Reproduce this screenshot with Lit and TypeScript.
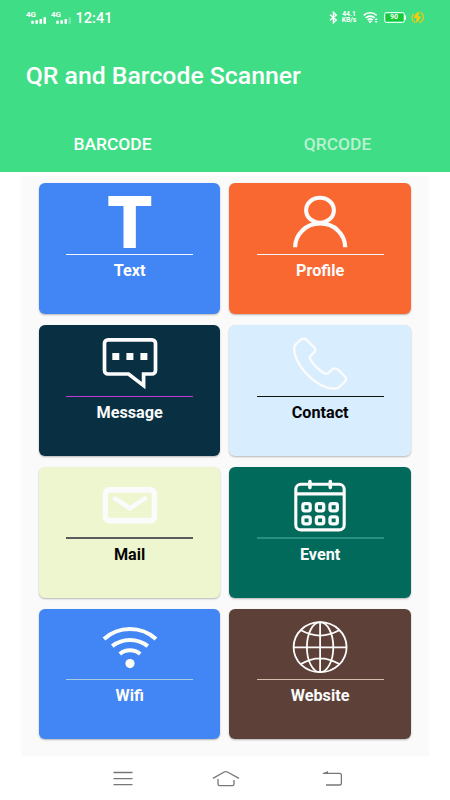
import { LitElement, html, svg, css } from "lit";
import { customElement } from "lit/decorators.js";
import { classMap } from "lit/directives/class-map.js";

const icons = {
  text: svg`<text class="glyph" x="29.9" y="52.6" text-anchor="middle">T</text>`,
  profile: svg`
    <ellipse cx="30" cy="16.2" rx="13.9" ry="12.5" stroke-width="4.1"/>
    <path d="M5.1 53.3A25 23.8 0 0 1 55.2 53.3" stroke-width="4.2"/>`,
  message: svg`
    <path d="M8 3.8H52a3.5 3.5 0 0 1 3.5 3.5V34.5a3.5 3.5 0 0 1-3.5 3.5H43.6V49.6L28.6 38H8a3.5 3.5 0 0 1-3.5-3.5V7.3A3.5 3.5 0 0 1 8 3.8Z" stroke-width="3.7"/>
    <path class="solid" d="M12.3 16.9h7v7h-7zM26.4 16.9h7v7h-7zM40.4 16.9h7v7h-7z"/>`,
  contact: svg`
    <path d="M10.6 3.8L5.8 8.4Q3.6 10.8 4.3 15.8C6.8 28.5 18 41.7 29.5 48.2Q41 54.4 48.5 51.8L55.2 45.3Q57 43 55.2 40.8L48.2 33.9Q45.3 31.6 42.4 33.2L38.4 36.8Q36.8 38.4 34.6 37.4C28 33.8 23.4 28.6 20.2 23.2Q19.2 21.1 20.8 19.6L24.5 15.9Q26.2 13.9 24.5 11.8L16.3 3.7Q13.5 1.6 10.6 3.8Z" stroke-width="2.4"/>`,
  mail: svg`
    <rect x="5.4" y="11.9" width="49.1" height="30.7" rx="4" stroke-width="5.6"/>
    <path d="M13.2 19.3L30 30.4L46.7 19.3" stroke-width="4.6"/>`,
  event: svg`
    <rect x="5.8" y="6.3" width="48.4" height="45.6" rx="5" stroke-width="3.1"/>
    <path d="M6 15.8H54" stroke-width="3.3"/>
    <path d="M19.9 3.6V9.6M40.3 3.6V9.6" stroke-width="3.6" stroke-linecap="round"/>
    ${[25.7, 38.8].map((y) => [12.9, 26.4, 40].map((x) => svg`
      <rect x=${x} y=${y} width="7.3" height="7.1" rx="1.8" stroke-width="3.3"/>`))}`,
  wifi: svg`
    <path d="M4 19A38.8 38.8 0 0 1 56 19M12.2 26.2A29 29 0 0 1 47.8 26.2M19.8 34A16 16 0 0 1 40.2 34" stroke-width="4"/>
    <circle class="solid" cx="30" cy="43.6" r="4.6"/>`,
  website: svg`
    <ellipse cx="30.1" cy="27.2" rx="26.5" ry="25" stroke-width="1.8"/>
    <ellipse cx="30.1" cy="27.2" rx="13.2" ry="25" stroke-width="1.8"/>
    <path d="M30.1 2V52.5M3.5 27.4H56.7M11 10.3Q30 20.8 49.2 10.3M11 44Q30 32.6 49.2 44" stroke-width="1.8"/>`,
};

type Kind = keyof typeof icons;

const tiles: { kind: Kind; label: string }[] = [
  { kind: "text", label: "Text" },
  { kind: "profile", label: "Profile" },
  { kind: "message", label: "Message" },
  { kind: "contact", label: "Contact" },
  { kind: "mail", label: "Mail" },
  { kind: "event", label: "Event" },
  { kind: "wifi", label: "Wifi" },
  { kind: "website", label: "Website" },
];

@customElement("app-root")
export class AppRoot extends LitElement {
  static styles = css`
    :host {
      display: flex;
      flex-direction: column;
      height: 800px;
      background: #fff;
      font-family: Roboto, "Liberation Sans", sans-serif;
      overflow: hidden;
    }
    svg { display: block; flex: none; fill: none; stroke: currentColor; overflow: visible; }
    .solid { fill: currentColor; stroke: none; }
    header {
      height: 172px;
      flex: none;
      display: flex;
      flex-direction: column;
      background: #3fdd85;
      color: #fff;
    }
    .status {
      height: 35px;
      display: flex;
      align-items: center;
      padding: 0 26px;
      box-sizing: border-box;
    }
    .signal { width: 21px; margin-right: 4px; }
    .net { font-size: 8px; line-height: 6px; height: 5px; font-weight: 700; }
    .bars { margin-left: 5px; }
    .clock { font-size: 14.6px; font-weight: 500; margin-left: -0.5px; }
    .right { margin-left: auto; display: flex; align-items: center; }
    .speed {
      width: 15px;
      margin: -1px 6px 0 4px;
      font-size: 6.8px;
      line-height: 6.5px;
      font-weight: 700;
      text-align: center;
      white-space: nowrap;
    }
    .battery {
      display: flex;
      align-items: center;
      margin: 0 5px 0 6px;
    }
    .cell {
      width: 21px;
      height: 11px;
      box-sizing: border-box;
      border: 1px solid #e9ffe9;
      border-radius: 2.5px;
      padding: 1px;
    }
    .level {
      height: 7px;
      background: #18c935;
      font-size: 7px;
      line-height: 7.5px;
      font-weight: 700;
      text-align: center;
    }
    .tip { width: 1.5px; height: 5px; background: #e9ffe9; border-radius: 0 1px 1px 0; }
    .charge { color: #f2cc0c; }
    h1 {
      margin: 0;
      padding: 25px 0 0 25.7px;
      height: 56px;
      font-size: 24.8px;
      line-height: 31px;
      font-weight: 500;
      white-space: nowrap;
    }
    .tabs { display: grid; grid-template-columns: 1fr 1fr; }
    .tab {
      height: 56px;
      line-height: 56px;
      text-align: center;
      font-size: 17.4px;
      font-weight: 500;
      color: #b9f1d0;
    }
    .tab.active { color: #fff; }
    main {
      flex: none;
      box-sizing: border-box;
      width: 407.3px;
      height: 580px;
      margin: 4.3px 0 0 21.3px;
      padding: 7px 17.6px 0 17.7px;
      background: #fafafa;
      display: grid;
      grid-template-columns: repeat(2, 181.3px);
      grid-auto-rows: 130.8px;
      column-gap: 9.2px;
      row-gap: 11px;
      align-content: start;
    }
    .card {
      display: flex;
      flex-direction: column;
      align-items: center;
      box-sizing: border-box;
      padding-top: 11px;
      border-radius: 6px;
      color: #fbfbfb;
      box-shadow: 0 1px 2px rgba(0, 0, 0, 0.28);
    }
    .rule { width: 127px; height: 1.2px; margin-top: 3.5px; background: #f0f3f8; flex: none; }
    .label { font-size: 16.2px; line-height: 20px; font-weight: 700; margin-top: 6px; }
    .glyph {
      font: 700 70.3px Roboto, sans-serif;
      fill: currentColor;
      stroke-width: 2;
    }
    .text { background: #4285f4; color: #fff; }
    .profile { background: #fa6831; }
    .message { background: #083042; }
    .message .rule { background: #c13bdb; }
    .contact { background: #d8eefe; }
    .contact .rule { background: #10160f; }
    .mail { background: #edf6ce; }
    .mail .rule { background: #5b5c5e; }
    .contact .label, .mail .label { color: #050505; }
    .event { background: #026a5b; }
    .event .rule { background: #26917f; }
    .wifi { background: #4285f4; color: #fdfdf8; }
    .wifi .rule { background: #a9cddd; }
    .website { background: #5d4138; }
    .website .rule { background: #d2bfae; }
    nav {
      flex: 1;
      display: grid;
      grid-template-columns: 102.5px 102.5px 110px;
      justify-content: center;
      justify-items: center;
      padding: 12px 0 0 8.5px;
      color: #777;
    }
  `;

  private signal(weak: boolean) {
    return html`<div class="signal">
      <div class="net">4G</div>
      <svg class="bars" width="16" height="7" viewBox="0 0 16 7">
        <path class="solid" d="M0.3 3.8h2.5v3h-2.5zM4.4 3.2h2.5v3.6h-2.5zM8.5 2h2.5v4.8h-2.5z"/>
        <path class="solid" opacity=${weak ? 0.3 : 1} d="M12.5 0.3h2.5v6.5h-2.5z"/>
      </svg>
    </div>`;
  }

  render() {
    return html`
      <header>
        <div class="status">
          ${this.signal(false)}${this.signal(true)}
          <span class="clock">12:41</span>
          <div class="right">
            <svg width="9" height="13" viewBox="0 0 9 13">
              <path d="M1 3.7L7.3 9L4.4 11.7V1.3L7.3 4L1 9.3" stroke-width="1.4"/>
            </svg>
            <div class="speed">44.1<br />KB/s</div>
            <svg width="15" height="13" viewBox="0 0 15 13">
              <path d="M0.7 4.4A9.3 9.3 0 0 1 13.7 4.4M2.7 6.9A6.4 6.4 0 0 1 11.7 6.9M4.7 9.1A3.7 3.7 0 0 1 9.7 9.1" stroke-width="1.7"/>
              <path class="solid" d="M5.4 10.2Q7.2 8.9 9 10.2L7.2 12.3zM11.6 9L13.1 7L14.6 9zM11.6 10L13.1 12L14.6 10z"/>
            </svg>
            <div class="battery">
              <div class="cell"><div class="level">90</div></div>
              <div class="tip"></div>
            </div>
            <svg class="charge" width="13" height="13" viewBox="0 0 13 13">
              <path d="M2.6 3A5.4 5.4 0 0 0 4.2 11.6M9.6 1.6A5.4 5.4 0 0 1 8 11.6" stroke-width="1.2"/>
              <path class="solid" d="M8.8 0.6Q4.2 1.6 2.8 6.9H5.8L4.4 11.8Q9 9.8 10 5.2H7.2z"/>
            </svg>
          </div>
        </div>
        <h1>QR and Barcode Scanner</h1>
        <div class="tabs">
          <div class="tab active">BARCODE</div>
          <div class="tab">QRCODE</div>
        </div>
      </header>
      <main>
        ${tiles.map((t) => html`
          <div class=${classMap({ card: true, [t.kind]: true })}>
            <svg width="60" height="56" viewBox="0 0 60 56">${icons[t.kind]}</svg>
            <div class="rule"></div>
            <div class="label">${t.label}</div>
          </div>`)}
      </main>
      <nav>
        <svg width="28" height="20" viewBox="0 0 28 20">
          <path d="M4.5 4.5H23.5M4.5 10.6H23.5M4.5 16.7H23.5" stroke-width="1.3"/>
        </svg>
        <svg width="28" height="20" viewBox="0 0 28 20">
          <path d="M1 10.4L12.2 4Q13.8 3.1 15.4 4L27 10.4M6 11V16Q6 17.7 7.7 17.7H20.3Q22 17.7 22 16V12" stroke-width="1.3"/>
        </svg>
        <svg width="28" height="20" viewBox="0 0 28 20">
          <path d="M5 5.4H21.5Q23.4 5.4 23.4 7.3V15Q23.4 17 21.5 17H8" stroke-width="1.3"/>
          <path class="solid" d="M4 6L10 3V6z"/>
        </svg>
      </nav>
    `;
  }
}
